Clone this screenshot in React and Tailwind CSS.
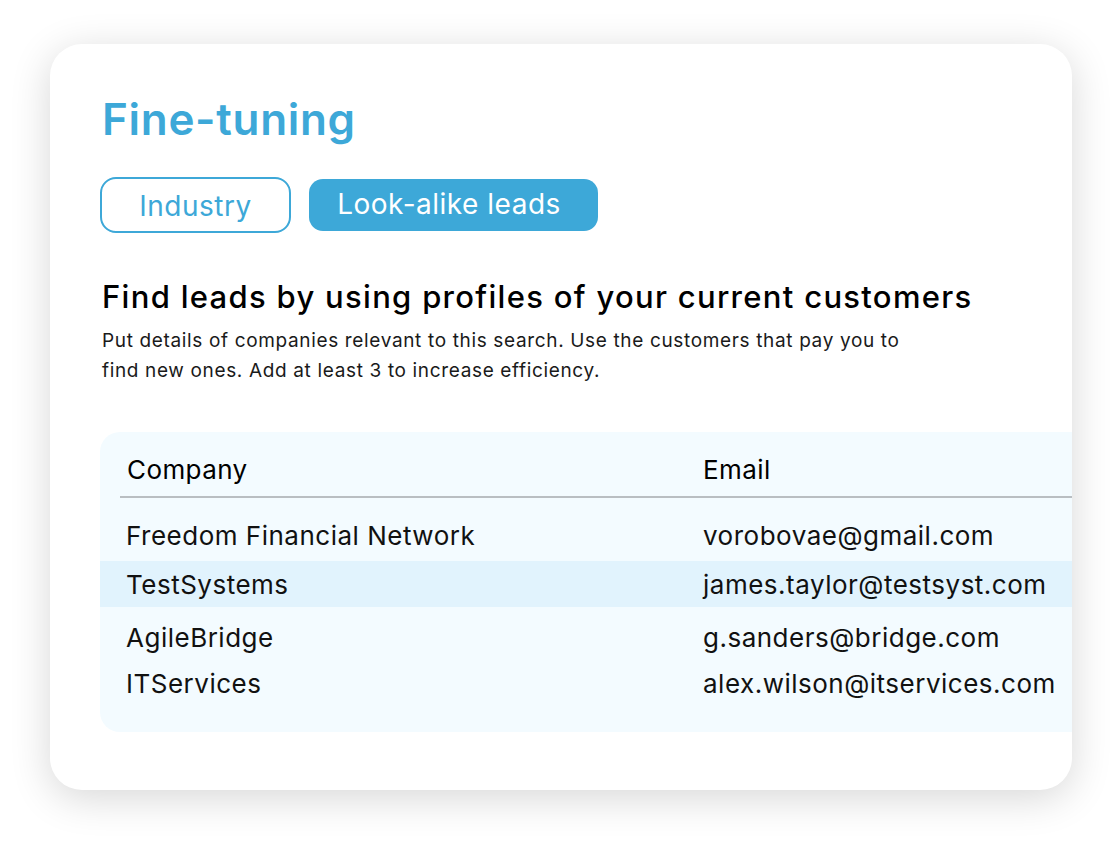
import React from "react";

const ROWS = [
  { company: "Freedom Financial Network", email: "vorobovae@gmail.com", h: "h-[51px] mt-[12px]", active: false },
  { company: "TestSystems", email: "james.taylor@testsyst.com", h: "h-[46px]", active: true },
  { company: "AgileBridge", email: "g.sanders@bridge.com", h: "h-[60px]", active: false },
  { company: "ITServices", email: "alex.wilson@itservices.com", h: "h-[32px]", active: false },
];

export default function App() {
  return (
    <div className="min-h-[845px] w-[1120px] bg-white pl-[50px] pt-[44px] font-['Inter',sans-serif]">
      <div className="h-[746px] w-[1022px] overflow-hidden rounded-[32px] bg-white pl-[50px] pt-[43px] shadow-[0_8px_40px_rgba(0,0,0,0.16)]">
        <h1 className="pl-[2px] text-[44px] font-semibold leading-[64px] tracking-[0.7px] text-[#3da8d8]">
          Fine-tuning
        </h1>

        <div className="mt-[26px] flex items-center gap-[18px]">
          <button className="flex h-[56px] w-[191px] items-center justify-center rounded-[16px] border-2 border-[#3da8d8] pt-[2px] text-[28px] tracking-[0.5px] text-[#3da8d8]">
            Industry
          </button>
          <button className="flex h-[52px] w-[289px] items-center justify-center rounded-[14px] bg-[#3da8d8] pb-[2px] pr-[9px] text-[28px] tracking-[0.5px] text-white">
            Look-alike leads
          </button>
        </div>

        <h2 className="mt-[44px] pl-[2px] text-[31px] font-medium leading-[40px] tracking-[1.3px] text-black">
          Find leads by using profiles of your current customers
        </h2>
        <p className="mt-[9px] pl-[2px] text-[19px] leading-[30px] tracking-[0.65px] text-[#1a1a1a]">
          Put details of companies relevant to this search. Use the customers that pay you to
          <br />
          find new ones. Add at least 3 to increase efficiency.
        </p>

        <div className="mt-[46px] w-[1000px] rounded-l-[20px] bg-[#f3fbff] pb-[33px]">
          <div className="ml-[20px] flex h-[66px] items-center border-b-2 border-[#b9bec2] pt-[10px] text-[26px] tracking-[0.4px] text-black">
            <span className="w-[583px] pl-[7px]">Company</span>
            <span>Email</span>
          </div>
          {ROWS.map((r) => (
            <div
              key={r.company}
              className={`flex items-center text-[26px] tracking-[0.5px] text-[#111] ${r.h} ${r.active ? "bg-[#e1f3fd]" : ""}`}
            >
              <span className="w-[603px] pl-[26px]">{r.company}</span>
              <span>{r.email}</span>
            </div>
          ))}
        </div>
      </div>
    </div>
  );
}
